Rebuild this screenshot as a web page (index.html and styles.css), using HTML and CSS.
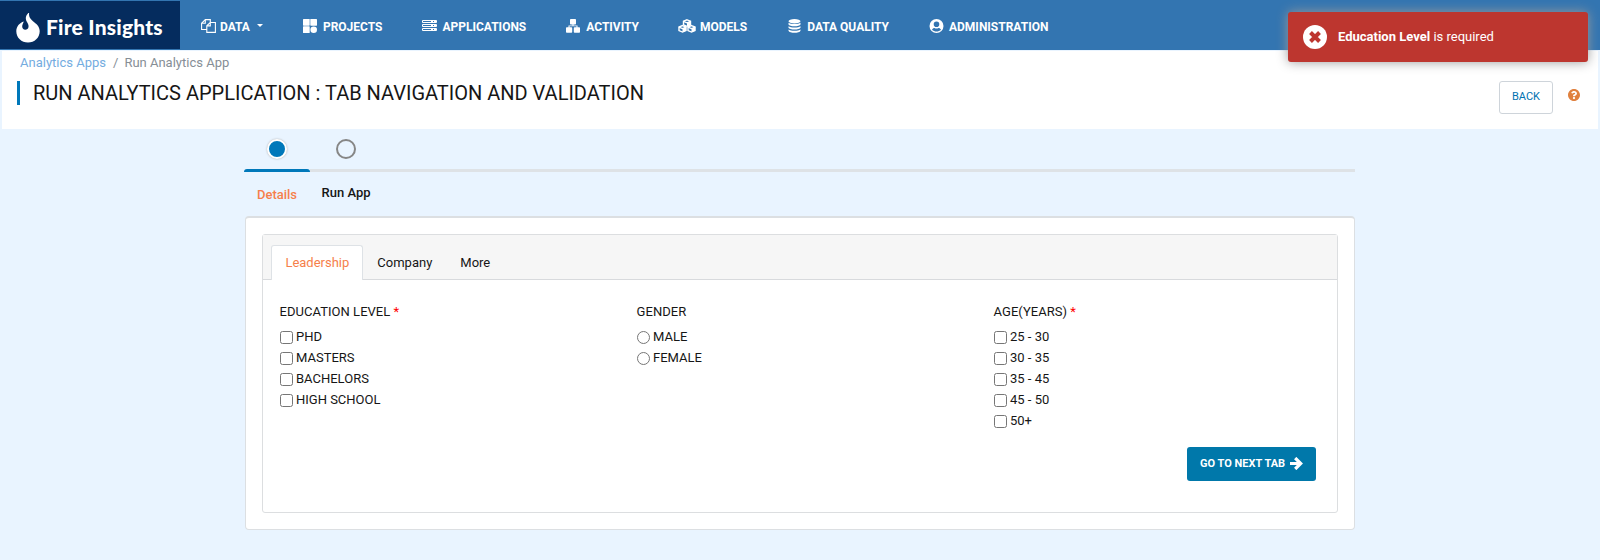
FILE: index.html
```html
<!DOCTYPE html>
<html lang="en">
<head>
<meta charset="utf-8">
<title>Fire Insights</title>
<link rel="stylesheet" href="styles.css">
</head>
<body>
<nav class="navbar">
  <a class="brand">
    <svg class="flame" viewBox="0 0 24 31"><path d="M12.300 1C9.300 4 9.300 7 11 10c1.300 2.300 1.700 3.400 1.500 5-.3 1.700-1.500 2.700-3.200 2.700-1.900 0-3.100-1.300-3.100-3.200 0-1.800 1-3 1.600-5C3.500 10.800.3 14.500.3 19.200.3 25.600 5.500 30.500 12 30.500s11.700-4.900 11.700-11.300c0-4.200-2.400-6.500-5.500-9C15 7.600 12.600 5.500 13.100 1z" fill="#fff"/></svg>
    <span class="brand-name">Fire Insights</span>
  </a>
  <div class="menu">
    <a class="item"><svg class="ic i-data" viewBox="0 0 15 14" fill="none" stroke="#fff" stroke-width="1.100"><path d="M5.500 10.500H.6V4.300L4.300.6h5v3M.6 4.300h3.700V.6M14.400 13.400H5.800V6.800l3.400-3.300h5.200zM5.800 6.900h3.500V3.500"/></svg><span class="t">DATA</span><i class="caret"></i></a>
    <a class="item"><svg class="ic i-proj" viewBox="0 0 14 14" fill="#fff"><rect width="6.700" height="6.700" rx=".6"/><rect x="7.300" width="6.700" height="6.700" rx=".6"/><rect y="7.300" width="6.700" height="6.700" rx=".6"/><circle cx="10.700" cy="10.700" r="3.300"/></svg><span class="t">PROJECTS</span></a>
    <a class="item"><svg class="ic i-apps" viewBox="0 0 15 14" fill="none" stroke="#fff"><path d="M.5 1.500h14v2H.5zM.5 5.500h14v2H.5zM.5 9.500h14v2H.5z"/><path d="M9 2.500h5M9 6.500h5M9 10.500h5" stroke-dasharray="2 1"/></svg><span class="t">APPLICATIONS</span></a>
    <a class="item"><svg class="ic i-act" viewBox="0 0 14 14" fill="#fff"><rect x="4" width="6" height="5.500" rx=".8"/><rect y="8.300" width="6.200" height="5.500" rx=".8"/><rect x="7.800" y="8.300" width="6.200" height="5.500" rx=".8"/><path d="M6.500 5h1v1.400h4V9h-1V7.300h-7V9h-1V6.400h4z"/></svg><span class="t">ACTIVITY</span></a>
    <a class="item"><svg class="ic i-mod" viewBox="0 0 18 14" fill="none" stroke="#fff" stroke-width="1.400"><g id="cube"><path d="M9 .8l3.500 1.400v3.600L9 7.300 5.500 5.800V2.200z"/><path d="M5.400 2.300L9 3.800l3.600-1.500"/><path d="M9 3.800l3.600-1.500v3.600L9 7.500z" fill="#fff" stroke="none"/></g><use href="#cube" x="-4.500" y="5.800"/><use href="#cube" x="4.500" y="5.800"/></svg><span class="t">MODELS</span></a>
    <a class="item"><svg class="ic i-db" viewBox="0 0 13 14" fill="#fff"><ellipse cx="6.500" cy="2.200" rx="6" ry="2.200"/><path d="M.5 3.700c2 1.800 10 1.800 12 0v1.700c-1 2.400-11 2.400-12 0zM.5 7.200c2 1.800 10 1.800 12 0v1.500c-1 2.400-11 2.400-12 0zM.5 10.400c2 1.800 10 1.800 12 0v1.400c-1 2.700-11 2.700-12 0z"/></svg><span class="t">DATA QUALITY</span></a>
    <a class="item"><svg class="ic i-adm" viewBox="0 0 15 14"><circle cx="7.500" cy="7" r="7" fill="#fff"/><circle cx="7.500" cy="5.400" r="2.700" fill="#fff" stroke="#3375b1" stroke-width="0"/><path d="M4.700 5.200a2.800 2.800 0 0 1 5.600 0 2.800 2.800 0 0 1-5.600 0zM3 10.700c.6-1.100 1.500-1.700 2.500-1.700 1.300.7 2.700.7 4 0 1 0 1.900.6 2.500 1.700-2.400 2.400-6.600 2.400-9 0z" fill="#3375b1"/></svg><span class="t">ADMINISTRATION</span></a>
  </div>
</nav>

<header class="page-head">
  <div class="crumbs"><a class="crumb-link">Analytics Apps</a><span class="sep">/</span><span class="crumb-now">Run Analytics App</span></div>
  <div class="title-row">
    <h1 class="title">RUN ANALYTICS APPLICATION : TAB NAVIGATION AND VALIDATION</h1>
    <div class="actions">
      <button class="back">BACK</button>
      <svg class="help" viewBox="8 8 496 496"><path fill="#e0813f" d="M504 256c0 136.997-111.043 248-248 248S8 392.997 8 256C8 119.083 119.043 8 256 8s248 111.083 248 248zM262.655 90c-54.497 0-89.255 22.957-116.549 63.758-3.536 5.286-2.353 12.415 2.715 16.258l34.699 26.310c5.205 3.947 12.621 3.008 16.665-2.122 17.864-22.658 30.113-35.797 57.303-35.797 20.429 0 45.698 13.148 45.698 32.958 0 14.976-12.363 22.667-32.534 33.976C247.128 238.528 216 254.941 216 296v4c0 6.627 5.373 12 12 12h56c6.627 0 12-5.373 12-12v-1.333c0-28.462 83.186-29.647 83.186-106.667 0-58.002-60.165-102-116.531-102zM256 338c-25.365 0-46 20.635-46 46 0 25.364 20.635 46 46 46s46-20.636 46-46c0-25.364-20.635-46-46-46z"/></svg>
    </div>
  </div>
</header>

<main class="wizard">
  <div class="steps">
    <div class="step step-on"><span class="dot"></span><span class="bar"></span><span class="step-name">Details</span></div>
    <div class="step step-off"><span class="dot"></span><span class="bar"></span><span class="step-name">Run App</span></div>
    <div class="step-rest"></div>
  </div>
  <section class="panel">
    <div class="card">
      <div class="tabs"><a class="tab active">Leadership</a><a class="tab">Company</a><a class="tab">More</a></div>
      <div class="fields">
        <div class="field">
          <div class="legend">EDUCATION LEVEL <span class="req">*</span></div>
          <label class="opt"><input type="checkbox">PHD</label>
          <label class="opt"><input type="checkbox">MASTERS</label>
          <label class="opt"><input type="checkbox">BACHELORS</label>
          <label class="opt"><input type="checkbox">HIGH SCHOOL</label>
        </div>
        <div class="field">
          <div class="legend">GENDER</div>
          <label class="opt"><input type="radio" name="gender">MALE</label>
          <label class="opt"><input type="radio" name="gender">FEMALE</label>
        </div>
        <div class="field">
          <div class="legend">AGE(YEARS) <span class="req">*</span></div>
          <label class="opt"><input type="checkbox">25 - 30</label>
          <label class="opt"><input type="checkbox">30 - 35</label>
          <label class="opt"><input type="checkbox">35 - 45</label>
          <label class="opt"><input type="checkbox">45 - 50</label>
          <label class="opt"><input type="checkbox">50+</label>
        </div>
      </div>
      <div class="foot">
        <button class="next">GO TO NEXT TAB<svg class="arrow" viewBox="0 0 13 13" fill="none" stroke="#fff" stroke-width="3.200"><path d="M0 6.500h11M5.200 1l5.500 5.500L5.200 12"/></svg></button>
      </div>
    </div>
  </section>
</main>

<div class="toast">
  <svg class="toast-ic" viewBox="0 0 24 24"><circle cx="12" cy="12" r="12" fill="#fff"/><path d="M7.500 7.500l9 9M16.500 7.500l-9 9" stroke="#bd362f" stroke-width="4"/></svg>
  <span class="toast-msg"><b>Education Level</b> is required</span>
</div>
</body>
</html>
```
FILE: styles.css
```css
* { box-sizing: border-box; }
body { margin: 0; background: #e9f4ff; font-family: Roboto, "Liberation Sans", sans-serif; font-size: 13px; color: #161616; height: 560px; overflow: hidden; }

.navbar { height: 50px; background: #3375b1; display: flex; align-items: center; }
.brand { width: 180px; height: 48px; background: #052c5e; display: flex; align-items: center; padding-left: 16px; }
.flame { width: 24px; height: 31px; margin-top: 4px; }
.brand-name { font: 900 21px/24px Lato, sans-serif; letter-spacing: .2px; color: #fff; margin: 4px 0 0 6px; white-space: nowrap; }
.menu { display: flex; gap: 40px; padding: 2px 0 0 21px; }
.item { display: flex; align-items: center; color: #fff; font-size: 12px; font-weight: 700; line-height: 20px; white-space: nowrap; }
.ic { height: 14px; margin-right: 5px; flex: none; }
.i-data, .i-apps, .i-adm { width: 15px; }
.i-proj, .i-act { width: 14px; }
.i-proj { margin-right: 6px; }
.i-data { margin-right: 4px; }
.i-act { margin-right: 6px; }
.i-mod { width: 18px; margin: 0 4px 0 -1px; }
.i-db { width: 13px; margin: 0 6px 0 1px; }
.t { display: block; padding-top: 1px; }
.caret { border: 3.500px solid transparent; border-top-color: #fff; border-bottom: 0; margin: -1px 0 0 7px; }

.page-head { margin: 1px 2px 0; height: 78px; background: #fff; padding: 4px 11px 0 18px; }
.crumbs { display: flex; line-height: 16px; color: #868e96; }
.crumb-link { color: #74acdf; }
.sep { margin: 0 6px 0 7px; }
.title-row { display: flex; justify-content: space-between; padding-top: 10px; margin-left: -3px; }
.title { margin: 0; height: 24px; border-left: 3px solid #0078ba; padding-left: 13px; font-size: 20px; font-weight: 400; line-height: 25px; white-space: nowrap; }
.actions { display: flex; gap: 15px; margin-right: 7px; }
.back { width: 54px; height: 33px; border: 1px solid #ced4da; border-radius: 3px; background: #fff; color: #0072b1; font: 11px/28px Roboto, sans-serif; padding: 0 0 2px; }
.help { width: 12px; height: 12px; margin-top: 8px; }

.wizard { width: 1111px; margin-left: 244px; }
.steps { display: flex; height: 87px; }
.step { display: flex; flex-direction: column; align-items: center; }
.step-on { width: 66px; }
.step-off { width: 72px; }
.dot { width: 20px; height: 20px; border-radius: 50%; margin: 10px 0; flex: none; }
.step-on .dot { background: #0078ba; border: 2px solid #fff; box-shadow: 0 0 2px #aaa; }
.step-off .dot { border: 2px solid #868686; }
.bar { width: 100%; height: 3px; background: #dee2e6; flex: none; }
.step-on .bar { background: #0078ba; border-radius: 3px 3px 0 0; }
.step-name { font-weight: 500; line-height: 16px; margin-top: 13px; }
.step-on .step-name { color: #f67f4b; margin-top: 15px; }
.step-rest { flex: 1; height: 3px; margin-top: 40px; background: #dee2e6; }

.panel { margin-left: 1px; height: 314px; background: #fff; border: 1px solid #dcdfe2; border-top-width: 2px; border-radius: 4px; padding: 16px; }
.card { height: 279px; border: 1px solid #dcdee0; border-radius: 3px; }
.tabs { display: flex; align-items: flex-end; height: 45px; padding-left: 8px; background: #f6f6f6; border-bottom: 1px solid #d8dadd; }
.tab { height: 35px; margin-bottom: -1px; padding: 0 12.600px 0 13.400px; border: 1px solid transparent; border-bottom: 0; line-height: 33px; }
.tab.active { color: #f67f4b; background: #fff; border-color: #dee2e6; border-radius: 3px 3px 0 0; }
.fields { display: grid; grid-template-columns: 357px 357px 1fr; padding: 23px 17px 0 16.600px; height: 167px; }
.legend { line-height: 18px; margin-bottom: 5px; letter-spacing: .03px; }
.req { color: red; }
.opt { display: flex; align-items: center; height: 21px; line-height: 21px; }
.opt input { width: 13px; height: 13px; margin: 1px 3.400px 0 0; }
.foot { display: flex; justify-content: flex-end; padding-right: 21px; }
.next { display: flex; align-items: center; width: 129px; height: 34px; padding: 0 0 1px 13px; border: 0; border-radius: 3px; background: #0078aa; color: #fff; font: 700 11px/30px Roboto, sans-serif; white-space: nowrap; }
.arrow { width: 13px; height: 13px; margin: -1px 0 0 5px; }

.toast { position: absolute; left: 1288px; top: 12px; width: 300px; height: 50px; display: flex; align-items: center; padding-left: 15px; border-radius: 3px; background: #bd362f; color: #fff; box-shadow: 0 0 12px #999; }
.toast-ic { width: 24px; height: 24px; margin-right: 11px; }
.toast-msg { line-height: 20px; }
```
